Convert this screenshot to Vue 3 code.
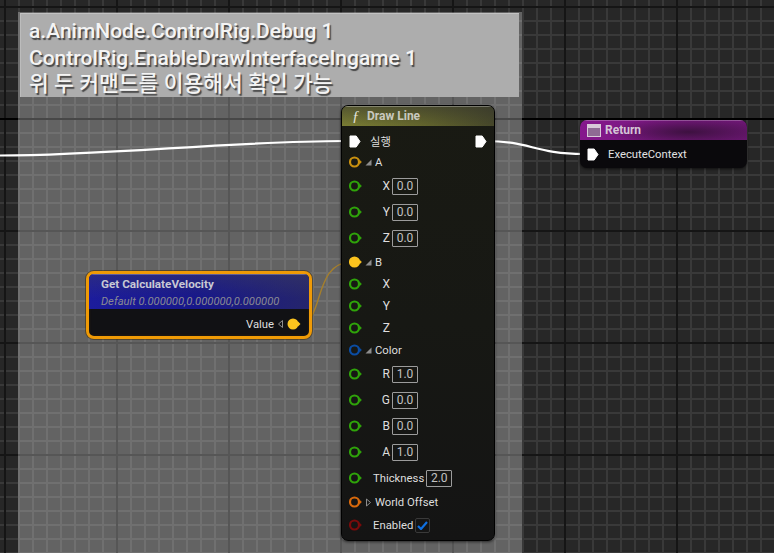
<script setup>
const rows = [
  { kind: 'exec' },
  { kind: 'head', pin: 'ring', color: '#c9900f', label: 'A', open: true },
  { kind: 'input', pin: 'ring', color: '#2fa30a', label: 'X', value: '0.0' },
  { kind: 'input', pin: 'ring', color: '#2fa30a', label: 'Y', value: '0.0' },
  { kind: 'input', pin: 'ring', color: '#2fa30a', label: 'Z', value: '0.0' },
  { kind: 'head', pin: 'fill', color: '#fbc31e', label: 'B', open: true },
  { kind: 'sub', pin: 'ring', color: '#2fa30a', label: 'X' },
  { kind: 'sub', pin: 'ring', color: '#2fa30a', label: 'Y' },
  { kind: 'sub', pin: 'ring', color: '#2fa30a', label: 'Z' },
  { kind: 'head', pin: 'ring', color: '#0b4da3', label: 'Color', open: true },
  { kind: 'input', pin: 'ring', color: '#2fa30a', label: 'R', value: '1.0' },
  { kind: 'input', pin: 'ring', color: '#2fa30a', label: 'G', value: '0.0' },
  { kind: 'input', pin: 'ring', color: '#2fa30a', label: 'B', value: '0.0' },
  { kind: 'input', pin: 'ring', color: '#2fa30a', label: 'A', value: '1.0' },
  { kind: 'wide', pin: 'ring', color: '#2fa30a', label: 'Thickness', value: '2.0' },
  { kind: 'head', pin: 'ring', color: '#d8690c', label: 'World Offset', open: false },
  { kind: 'check', pin: 'ring', color: '#7a0b0b', label: 'Enabled' }
]
</script>

<template>
  <div class="canvas">
    <svg class="grid" width="774" height="553" viewBox="0 0 774 553" shape-rendering="crispEdges">
      <defs>
        <pattern id="minor" x="4" y="6" width="14" height="14" patternUnits="userSpaceOnUse">
          <rect width="2" height="14" fill="#393939" />
          <rect width="14" height="2" fill="#393939" />
        </pattern>
        <pattern id="major" x="4" y="6" width="112" height="112" patternUnits="userSpaceOnUse">
          <rect width="2" height="112" fill="#151515" />
          <rect width="112" height="2" fill="#151515" />
        </pattern>
      </defs>
      <rect width="774" height="553" fill="#272727" />
      <rect width="774" height="553" fill="url(#minor)" />
      <rect width="774" height="553" fill="url(#major)" />
      <rect y="118" width="774" height="2" fill="#000" />
    </svg>

    <div class="comment">
      <div class="comment-title">
        <div class="line">a.AnimNode.ControlRig.Debug 1</div>
        <div class="line">ControlRig.EnableDrawInterfaceIngame 1</div>
        <div class="line ko">위 두 커맨드를 이용해서 확인 가능</div>
      </div>
    </div>

    <svg class="wires" width="774" height="553" viewBox="0 0 774 553" fill="none">
      <path d="M0 155.500 C110 155.500 230 141 345 141" stroke="#fff" stroke-width="2.200" />
      <path d="M486 141 C530 141 535 154 584 154" stroke="#fff" stroke-width="2.200" />
      <path d="M300 323 C325 323 312 262 352 262" stroke="#a57f2c" stroke-width="1.400" />
    </svg>

    <section class="node draw">
      <header class="draw-head"><i class="fn">ƒ</i><span>Draw Line</span></header>
      <div class="draw-body">
        <div v-for="(r, i) in rows" :key="i" class="row" :class="'row-' + r.kind">
          <template v-if="r.kind === 'exec'">
            <svg class="exec" width="12" height="13" viewBox="0 0 12 13"><path d="M1 1h6.200l3.800 5.500-3.800 5.500H1z" fill="#fff" stroke="#fff" stroke-linejoin="round" /></svg>
            <span class="exec-label">실행</span>
            <svg class="exec exec-out" width="12" height="13" viewBox="0 0 12 13"><path d="M1 1h6.200l3.800 5.500-3.800 5.500H1z" fill="#fff" stroke="#fff" stroke-linejoin="round" /></svg>
          </template>
          <template v-else>
            <svg class="pin" width="13" height="12" viewBox="0 0 13 12">
              <circle cx="5.500" cy="6" r="4.500" :fill="r.pin === 'fill' ? r.color : 'none'" :stroke="r.color" stroke-width="2.200" />
              <path d="M10.400 3.600 12.800 6l-2.400 2.400z" :fill="r.color" />
            </svg>
            <template v-if="r.kind === 'head'">
              <svg v-if="r.open" class="tri" width="7" height="7" viewBox="0 0 7 7"><path d="M6.500 .5v6H.5z" fill="#8d8d8d" /></svg>
              <svg v-else class="tri" width="7" height="9" viewBox="0 0 7 9"><path d="M1.500 1 5.500 4.500 1.500 8z" fill="none" stroke="#8d8d8d" /></svg>
              <span>{{ r.label }}</span>
            </template>
            <template v-else-if="r.kind === 'input' || r.kind === 'sub'">
              <span class="sub-label">{{ r.label }}</span>
              <span v-if="r.value" class="box">{{ r.value }}</span>
            </template>
            <template v-else>
              <span class="wide-label">{{ r.label }}</span>
              <span v-if="r.value" class="box">{{ r.value }}</span>
              <span v-else class="check">
                <svg width="11" height="9" viewBox="0 0 11 9" fill="none"><path d="M1 5l3 3 6-7" stroke="#0f6fe0" stroke-width="2.200" /></svg>
              </span>
            </template>
          </template>
        </div>
      </div>
    </section>

    <section class="node getter">
      <header class="get-head">
        <div class="get-title">Get CalculateVelocity</div>
        <div class="get-default">Default 0.000000,0.000000,0.000000</div>
      </header>
      <div class="get-body">
        <span>Value</span>
        <svg width="5" height="8" viewBox="0 0 5 8"><path d="M4.500 .5v7L.5 4z" fill="none" stroke="#8d8d8d" /></svg>
        <svg width="14" height="12" viewBox="0 0 14 12">
          <circle cx="6" cy="6" r="5.500" fill="#fbc31e" />
          <path d="M11 3.500 13.500 6 11 8.500z" fill="#fbc31e" />
        </svg>
      </div>
    </section>

    <section class="node ret">
      <header class="ret-head">
        <span class="ret-icon"><span></span></span>
        <span>Return</span>
      </header>
      <div class="ret-body">
        <svg width="12" height="13" viewBox="0 0 12 13"><path d="M1 1h6.200l3.800 5.500-3.800 5.500H1z" fill="#fff" stroke="#fff" stroke-linejoin="round" /></svg>
        <span>ExecuteContext</span>
      </div>
    </section>
  </div>
</template>

<style scoped>
.canvas {
  position: relative;
  width: 774px;
  height: 553px;
  overflow: hidden;
  font-family: Roboto, "Noto Sans CJK KR", sans-serif;
  background: #272727;
}
.grid {
  position: absolute;
  left: 0;
  top: 0;
}
.comment {
  position: absolute;
  left: 18px;
  top: 12px;
  width: 504px;
  height: 541px;
  background: rgba(255, 255, 255, 0.28);
}
.comment-title {
  margin: 1px 3px 0 2px;
  height: 84px;
  box-sizing: border-box;
  padding: 4px 8px 0;
  background: #adadad;
  border-top: 1px solid #c2c2c2;
  border-left: 1px solid #bcbcbc;
  color: #f4f4f4;
  font-size: 21px;
  font-weight: 500;
  white-space: nowrap;
  text-shadow: 1.500px 1.500px 1px rgba(0, 0, 0, 0.6);
}
.line {
  height: 26.500px;
  line-height: 26.500px;
}
.ko {
  font-size: 21.500px;
}
.wires {
  position: absolute;
  left: 0;
  top: 0;
}
.node {
  position: absolute;
  box-sizing: border-box;
  box-shadow: 0 1px 3px rgba(0, 0, 0, 0.6);
  overflow: hidden;
}
.draw {
  left: 341px;
  top: 105px;
  width: 154px;
  height: 436px;
  border-radius: 7px;
  border: 1px solid #000;
  background: linear-gradient(to bottom, #191a13, #171814 50%, #141414);
  color: #dedede;
  font-size: 11.300px;
}
.draw-head {
  display: flex;
  align-items: center;
  height: 20px;
  padding-left: 10px;
  background: linear-gradient(to bottom, rgba(50, 50, 45, 0.55), transparent), linear-gradient(to right, #7a7d33, #62642c 55%, #46472a);
  color: #c9c9c0;
  font-size: 12px;
  font-weight: 700;
  box-shadow: inset 0 1px 0 rgba(255, 255, 255, 0.3);
}
.fn {
  width: 15px;
  font-family: "Liberation Serif", serif;
  font-size: 15px;
  font-weight: 400;
  color: #e4e4dc;
}
.draw-body {
  padding-top: 5px;
}
.row {
  display: flex;
  align-items: center;
  height: 22px;
  padding-left: 7px;
}
.row-exec {
  height: 20px;
}
.row-input,
.row-wide {
  height: 26px;
}
.row-check {
  height: 24px;
}
.pin {
  flex: none;
  width: 13px;
}
.tri {
  flex: none;
  margin: 0 3px;
}
.sub-label {
  width: 28px;
  flex: none;
  text-align: right;
  font-size: 12px;
}
.wide-label {
  margin-left: 11px;
}
.box {
  box-sizing: border-box;
  width: 26px;
  height: 17px;
  margin-left: 2px;
  border: 1px solid #9c9c9c;
  border-radius: 1px;
  color: #c2c2c2;
  font-size: 12px;
  line-height: 15px;
  text-align: center;
}
.check {
  display: flex;
  align-items: center;
  justify-content: center;
  box-sizing: border-box;
  width: 15px;
  height: 15px;
  margin-left: 2px;
  border: 1px solid #3a3a3a;
  border-radius: 2px;
  background: #151515;
}
.exec {
  flex: none;
}
.exec-label {
  margin-left: 9px;
}
.exec-out {
  margin-left: auto;
  margin-right: 7px;
}
.getter {
  left: 86px;
  top: 271px;
  width: 226px;
  height: 68px;
  border: 3px solid #ef9a06;
  border-radius: 8px;
  background: #111114;
  box-shadow: 0 0 0 1px rgba(60, 40, 0, 0.5);
  color: #dedede;
}
.get-head {
  height: 35px;
  padding-left: 12px;
  background: linear-gradient(to bottom, rgba(70, 70, 90, 0.35), transparent 70%), linear-gradient(to right, #1c1c9c, #17178a 50%, #25256c);
  box-shadow: inset 0 1px 0 rgba(255, 255, 255, 0.25);
}
.get-title {
  padding-top: 3px;
  font-size: 11.700px;
  font-weight: 700;
  line-height: 15px;
  color: #c8c8d4;
}
.get-default {
  margin-top: 3px;
  font-size: 11.200px;
  font-style: italic;
  line-height: 14px;
  color: #8a8a92;
}
.get-body {
  display: flex;
  align-items: center;
  justify-content: flex-end;
  gap: 4px;
  height: 30px;
  padding-right: 8px;
  font-size: 11.300px;
  box-shadow: inset 0 -3px 3px rgba(110, 65, 0, 0.35);
}
.ret {
  left: 580px;
  top: 120px;
  width: 167px;
  height: 48px;
  border-radius: 7px;
  background: #0a090c;
  color: #e2e2e2;
}
.ret-head {
  display: flex;
  align-items: center;
  gap: 4px;
  height: 20px;
  padding-left: 7px;
  background: radial-gradient(ellipse 50% 70% at 65% 60%, #3d1140, transparent), linear-gradient(to right, #85188c, #6d1774);
  box-shadow: inset 0 1px 0 rgba(255, 255, 255, 0.25);
  font-size: 12px;
  font-weight: 700;
  color: #d5c4d6;
}
.ret-icon {
  display: block;
  box-sizing: border-box;
  width: 14px;
  height: 13px;
  border: 1px solid #d8c8d8;
  background: #8f6a94;
}
.ret-icon span {
  display: block;
  height: 3px;
  background: #d8c8d8;
}
.ret-body {
  display: flex;
  align-items: center;
  gap: 9px;
  height: 28px;
  padding-left: 7px;
  font-size: 11.300px;
}
</style>
